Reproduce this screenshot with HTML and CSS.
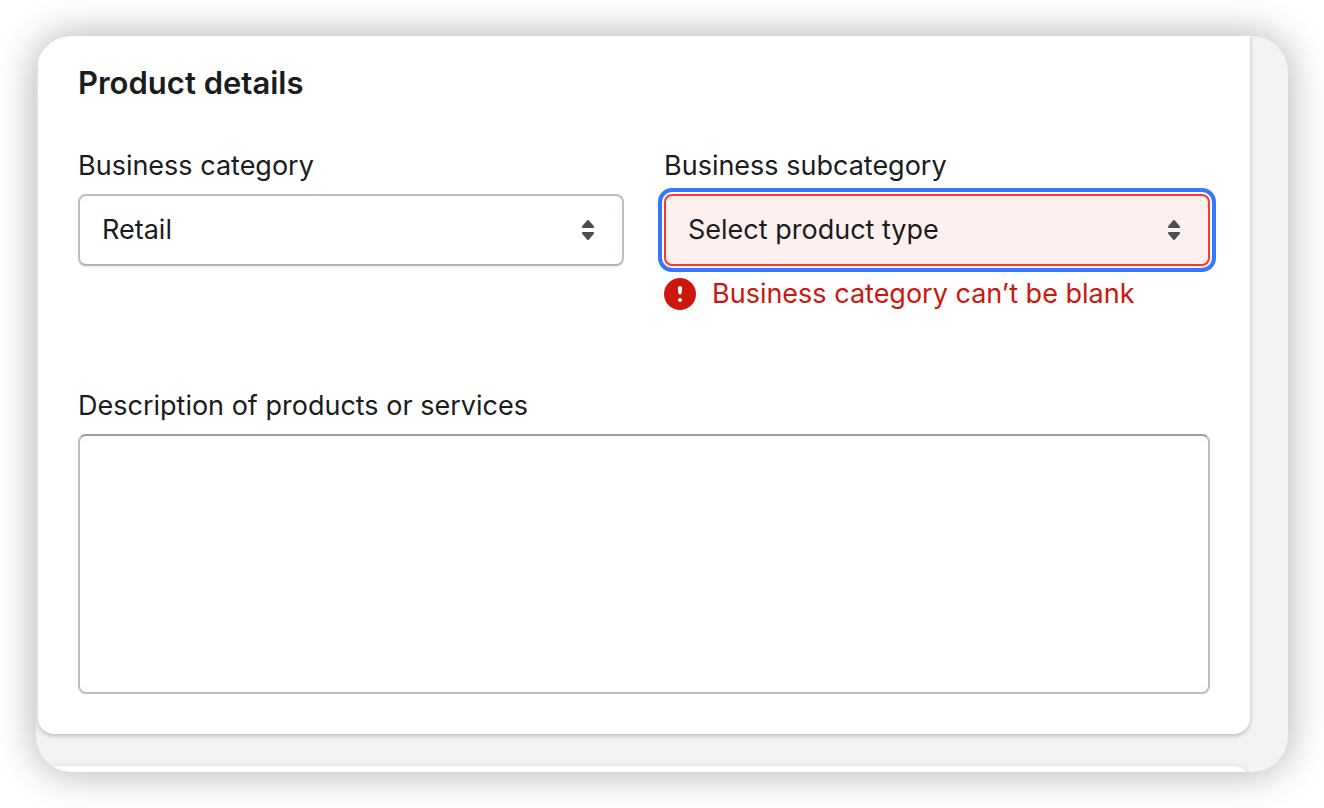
FILE: index.html
```html
<!DOCTYPE html>
<html lang="en">
<head>
    <meta charset="UTF-8">
    <meta name="viewport" content="width=device-width, initial-scale=1.0">
    <title>Product details</title>

    <link rel="stylesheet" href="styles.css">

</head>
<body>

    <main class="frame">
        <form class="card">
            <h2 class="card-title">Product details</h2>

            <div class="field-row">
                <div class="field">
                    <label for="category">Business category</label>
                    <div class="select-wrap">
                        <select id="category" name="category">
                            <option value="retail" selected>Retail</option>
                            <option value="services">Services</option>
                        </select>
                        <svg class="select-icon" viewBox="0 0 40 40" aria-hidden="true">
                            <path d="M19.3 10.3 Q20 9.600 20.700 10.300 L25.700 16 Q26.700 18 25.200 18 H14.800 Q13.300 18 14.300 16 Z M19.300 29.700 Q20 30.400 20.700 29.700 L25.700 24 Q26.700 22 25.200 22 H14.800 Q13.300 22 14.300 24 Z"/>
                        </svg>
                    </div>
                </div>

                <div class="field has-error">
                    <label for="subcategory">Business subcategory</label>
                    <div class="select-wrap">
                        <select id="subcategory" name="subcategory" aria-invalid="true" aria-describedby="subcategory-error">
                            <option value="" selected>Select product type</option>
                            <option value="clothing">Clothing</option>
                        </select>
                        <svg class="select-icon" viewBox="0 0 40 40" aria-hidden="true">
                            <path d="M19.3 10.3 Q20 9.600 20.700 10.300 L25.700 16 Q26.700 18 25.200 18 H14.800 Q13.300 18 14.300 16 Z M19.300 29.700 Q20 30.400 20.700 29.700 L25.700 24 Q26.700 22 25.200 22 H14.800 Q13.300 22 14.300 24 Z"/>
                        </svg>
                    </div>
                    <div class="error" id="subcategory-error">
                        <svg class="error-icon" viewBox="0 0 32 32" aria-hidden="true">
                            <circle cx="16" cy="16" r="16" fill="#cb170e"/>
                            <path d="M13.800 9.800 Q14 8 16 8 Q18 8 18.200 9.800 L17.600 15 Q17.400 16.400 16 16.400 Q14.600 16.400 14.400 15 Z" fill="#fff"/>
                            <circle cx="16" cy="22" r="2" fill="#fff"/>
                        </svg>
                        <span>Business category can’t be blank</span>
                    </div>
                </div>
            </div>

            <div class="field">
                <label for="description">Description of products or services</label>
                <textarea id="description" name="description"></textarea>
            </div>
        </form>

        <section class="card-next"></section>
    </main>

</body>
</html>
```

FILE: styles.css
```css
*{
    box-sizing: border-box;
}

body{
    font-family: Inter, "Liberation Sans", sans-serif;
    font-size: 27px;
    line-height: 40px;
    color: #1a1c1d;
    background-color: #fff;
    margin: 0;
    padding: 36px;
}

.frame{
    background-color: #f3f3f4;
    border-radius: 36px;
    overflow: hidden;
    padding: 0 38px 0 2px;
    box-shadow: 0 0 40px rgba(0, 0, 0, 0.32);
}

.card{
    background-color: #fff;
    padding: 24px 40px 40px;
    border-radius: 0 0 16px 16px;
    box-shadow: 0 0 10px rgba(23, 24, 24, 0.05), 0 2px 4px rgba(0, 0, 0, 0.2);
}

.card-title{
    font-size: 31px;
    font-weight: 600;
    line-height: 46px;
    margin: 0 0 40px;
}

.field-row{
    display: grid;
    grid-template-columns: 1fr 1fr;
    gap: 40px;
    margin-bottom: 72px;
}

.field{
    display: flex;
    flex-direction: column;
    gap: 8px;
}

.select-wrap{
    position: relative;
}

select, textarea{
    display: block;
    width: 100%;
    font: inherit;
    color: inherit;
    background-color: #fff;
    border: 2px solid #babfc4;
    border-radius: 8px;
}

select{
    height: 72px;
    padding: 0 64px 0 22px;
    appearance: none;
    border-bottom-color: #aeb4b9;
    box-shadow: 0 2px 0 rgba(0, 0, 0, 0.05);
}

textarea{
    height: 260px;
    padding: 14px 22px;
    border-top-color: #999fa4;
    resize: none;
}

.select-icon{
    position: absolute;
    top: 16px;
    right: 16px;
    width: 40px;
    height: 40px;
    fill: #4a4e52;
    pointer-events: none;
}

.has-error select{
    background-color: #fff0f0;
    border-color: #fd3730;
    outline: 4px solid #3577ff;
    outline-offset: 2px;
}

.error{
    display: flex;
    align-items: center;
    gap: 16px;
    color: #cb170e;
}

.error-icon{
    flex: none;
    width: 32px;
    height: 32px;
}

/* only the top edge of the next card shows */
.card-next{
    height: 40px;
    margin-top: 32px;
    margin-bottom: -34px;
    background-color: #fff;
    border-radius: 16px;
    box-shadow: 0 0 10px rgba(23, 24, 24, 0.05), 0 2px 4px rgba(0, 0, 0, 0.2);
}
```
